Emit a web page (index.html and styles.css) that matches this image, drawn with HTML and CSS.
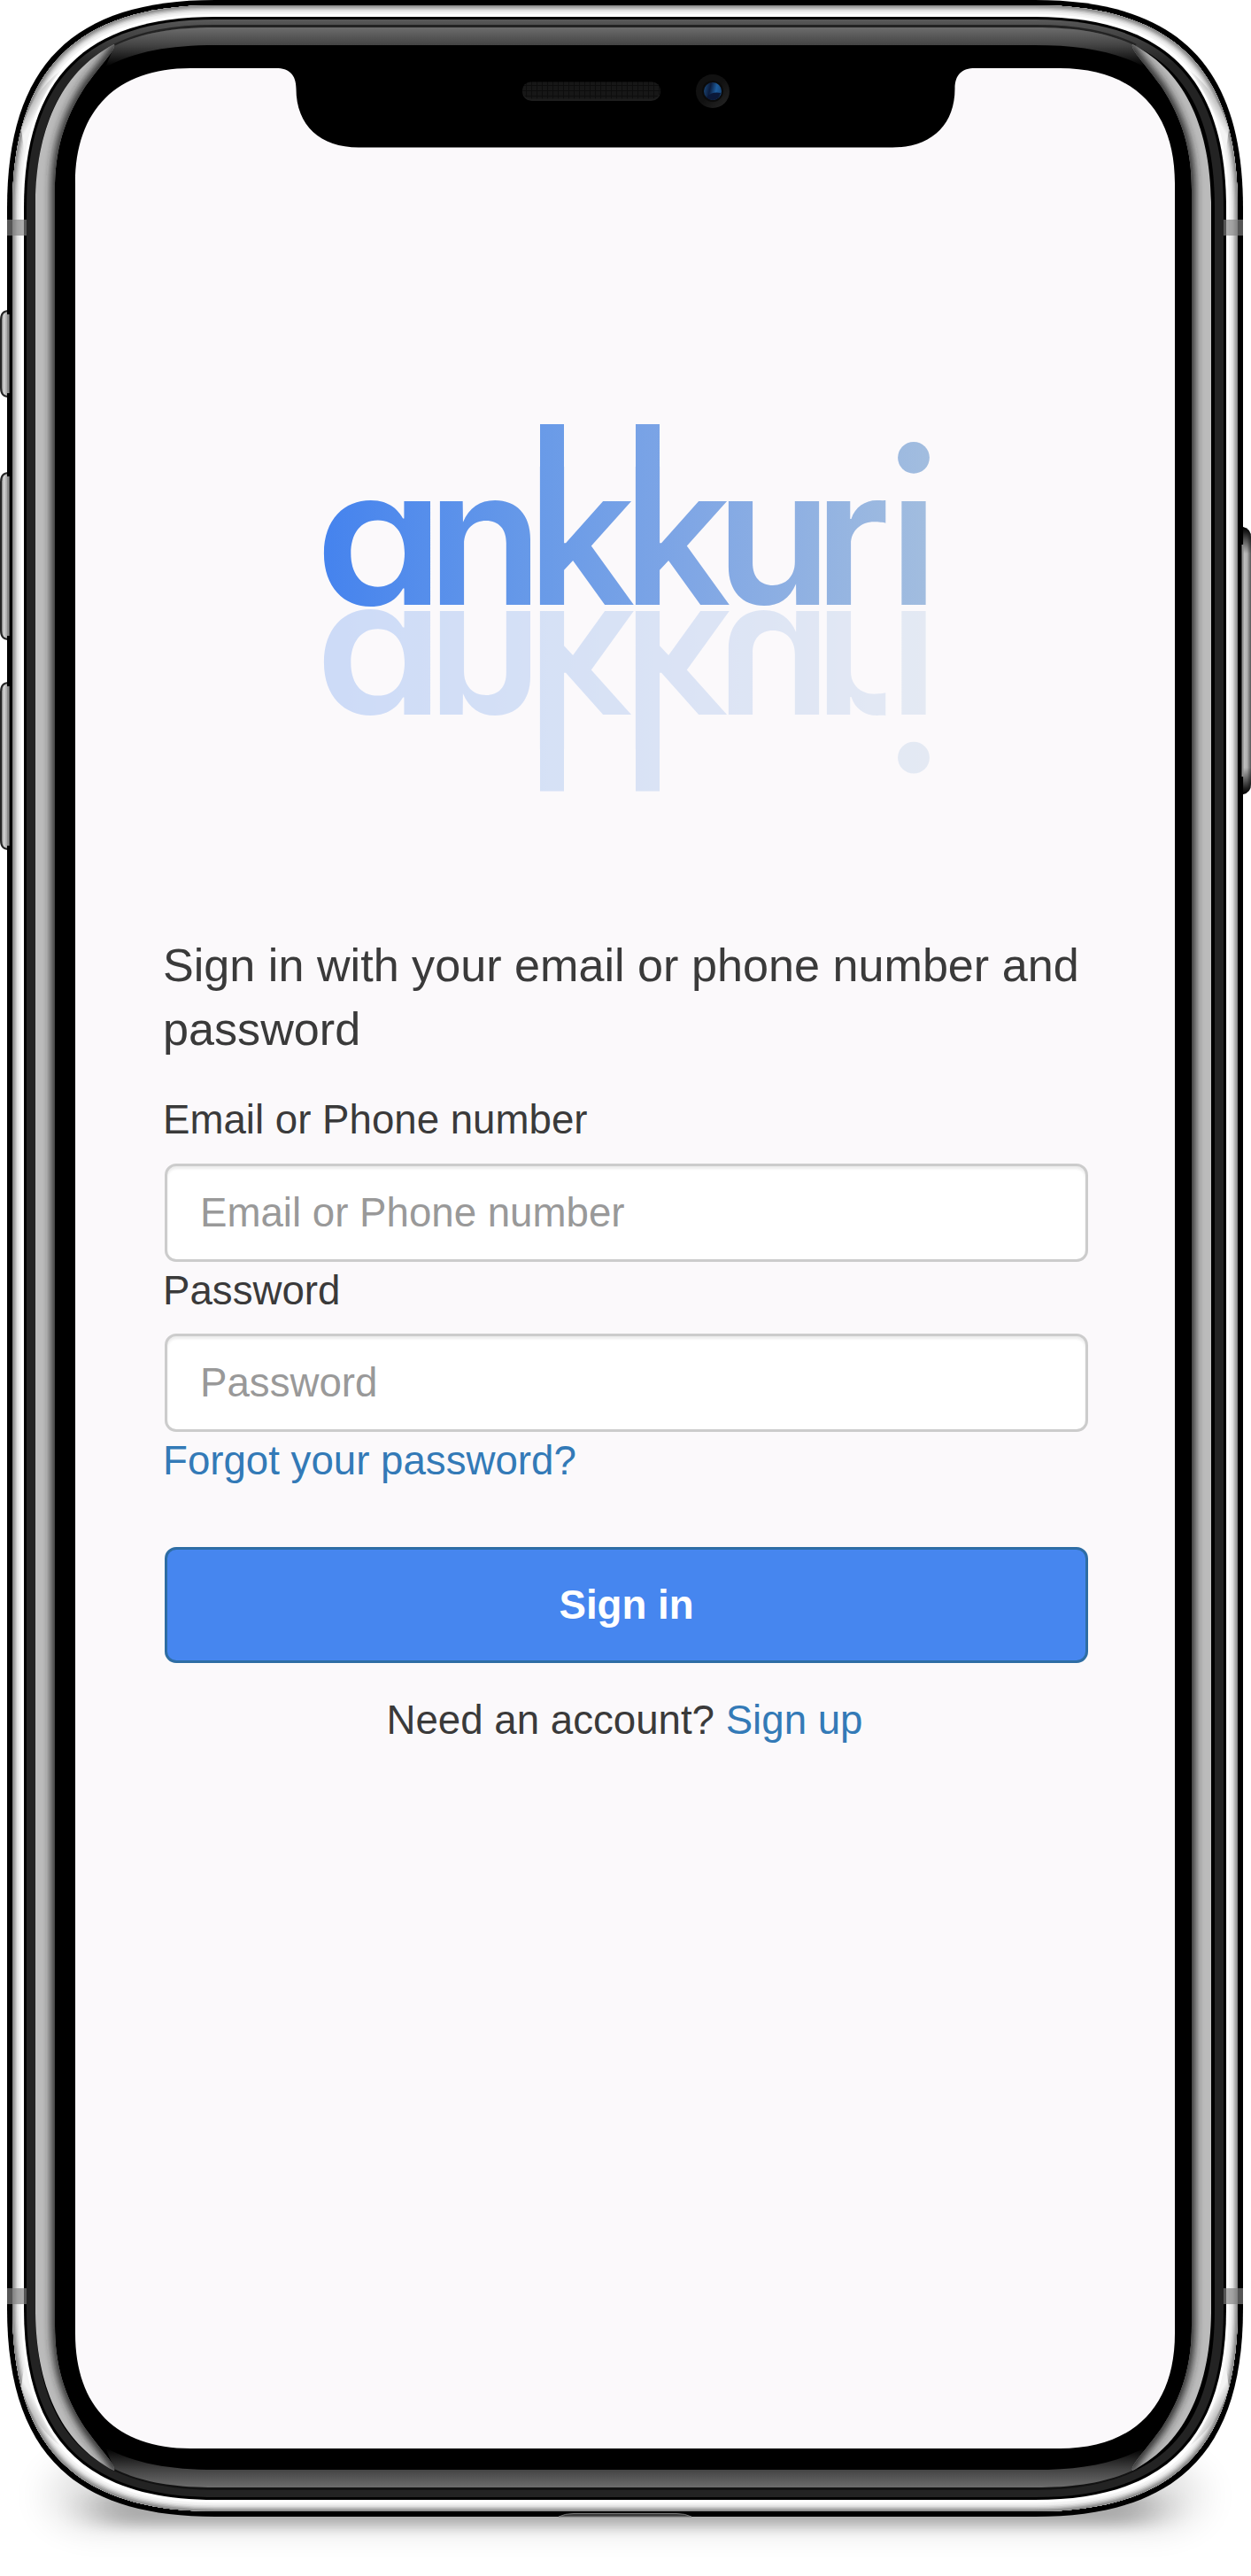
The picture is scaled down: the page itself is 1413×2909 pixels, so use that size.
FILE: index.html
```html
<!DOCTYPE html>
<html lang="en">
<head>
<meta charset="utf-8">
<title>ankkuri – Sign in</title>
<link rel="stylesheet" href="styles.css">
</head>
<body>
<div class="device">
  <svg class="frame" width="1413" height="2909" viewBox="0 0 1413 2909" aria-hidden="true">
    <defs>
      <path id="rim" d="M8 235C8 74 82 0 243 0H1169C1330 0 1404 74 1404 235V2607C1404 2768 1330 2842 1169 2842H243C82 2842 8 2768 8 2607Z"/>
      <path id="chrome" d="M14 235C14 78 86 6 243 6H1169C1326 6 1398 78 1398 235V2607C1398 2764 1326 2836 1169 2836H243C86 2836 14 2764 14 2607Z"/>
      <path id="lip" d="M27 235C27 88 96 19 243 19H1169C1316 19 1385 88 1385 235V2607C1385 2754 1316 2823 1169 2823H243C96 2823 27 2754 27 2607Z"/>
      <path id="band" d="M30 235C30 90 98 22 243 22H1169C1314 22 1382 90 1382 235V2607C1382 2752 1314 2820 1169 2820H243C98 2820 30 2752 30 2607Z"/>
      <path id="glass" d="M40 235C40 95 103 31 243 31H1169C1309 31 1372 95 1372 235V2607C1372 2747 1309 2811 1169 2811H243C103 2811 40 2747 40 2607Z"/>
      <clipPath id="chromeClip"><use href="#chrome"/></clipPath>
      <clipPath id="sideClip"><path d="M40 228C41 150 66 82 129 50C131 56 118 68 96 98C72 135 62 170 62 215V1421H40Z"/></clipPath>
      <linearGradient id="bandFill" gradientUnits="userSpaceOnUse" x1="0" y1="22" x2="0" y2="72">
        <stop offset="0" stop-color="#5a5a5a"/><stop offset=".12" stop-color="#505050"/><stop offset="1" stop-color="#232323"/>
      </linearGradient>
      <linearGradient id="topFill" gradientUnits="userSpaceOnUse" x1="0" y1="31" x2="0" y2="75">
        <stop offset="0" stop-color="#6c6c6c"/><stop offset=".46" stop-color="#434343"/><stop offset="1" stop-color="#000"/>
      </linearGradient>
      <linearGradient id="bottomFill" gradientUnits="userSpaceOnUse" x1="0" y1="2809" x2="0" y2="2765">
        <stop offset="0" stop-color="#6c6c6c"/><stop offset=".46" stop-color="#434343"/><stop offset="1" stop-color="#000"/>
      </linearGradient>
      <linearGradient id="glint" gradientUnits="userSpaceOnUse" x1="34" y1="108" x2="48" y2="116">
        <stop offset="0" stop-color="#999"/><stop offset="1" stop-color="#f4f4f4"/>
      </linearGradient>
      <linearGradient id="keyFill" x1="0" y1="0" x2="1" y2="0">
        <stop offset="0" stop-color="#555"/><stop offset=".3" stop-color="#d4d4d4"/><stop offset=".55" stop-color="#b4b4b4"/><stop offset="1" stop-color="#777"/>
      </linearGradient>
      <linearGradient id="powerFill" x1="0" y1="0" x2="1" y2="0">
        <stop offset="0" stop-color="#777"/><stop offset=".3" stop-color="#bebebe"/><stop offset=".6" stop-color="#b0b0b0"/><stop offset="1" stop-color="#555"/>
      </linearGradient>
      <linearGradient id="powerEnds" x1="0" y1="0" x2="0" y2="1">
        <stop offset="0" stop-color="#000"/><stop offset=".02" stop-color="#000" stop-opacity=".85"/><stop offset=".1" stop-color="#000" stop-opacity="0"/><stop offset=".9" stop-color="#000" stop-opacity="0"/><stop offset=".98" stop-color="#000" stop-opacity=".85"/><stop offset="1" stop-color="#000"/>
      </linearGradient>
      <linearGradient id="ring" x1="0" y1="0" x2="1" y2="1">
        <stop offset=".5" stop-color="#111"/><stop offset="1" stop-color="#272727"/>
      </linearGradient>
      <linearGradient id="lens" x1="0" y1="0" x2="1" y2=".2">
        <stop offset="0" stop-color="#1d4d7e"/><stop offset=".4" stop-color="#0c1c3c"/><stop offset=".75" stop-color="#1d5c9c"/><stop offset="1" stop-color="#184a80"/>
      </linearGradient>
      <pattern id="mesh" width="6" height="6" patternUnits="userSpaceOnUse">
        <rect width="6" height="6" fill="#171717"/><path d="M0 .5H6M.5 0V6" stroke="#0d0d0d"/>
      </pattern>
      <filter id="soft" filterUnits="userSpaceOnUse" x="0" y="0" width="160" height="1500"><feGaussianBlur stdDeviation="5"/></filter>
      <filter id="shadeWide" filterUnits="userSpaceOnUse" x="-100" y="2650" width="1613" height="350"><feGaussianBlur stdDeviation="24 18"/></filter>
      <filter id="shadeNear" filterUnits="userSpaceOnUse" x="0" y="2700" width="1413" height="300"><feGaussianBlur stdDeviation="24 7"/></filter>
      <g id="side">
        <g clip-path="url(#sideClip)">
          <rect x="30" y="30" width="110" height="1400" fill="#bbb"/>
          <path d="M128 48C131 56 118 68 96 98C72 135 62 170 62 215V1460" transform="translate(3 0)" fill="none" stroke="#282828" stroke-width="14" filter="url(#soft)"/>
        </g>
      </g>
      <path id="gleam" d="M24 146C32 120 46 97 69 79C48 106 34 137 28 175Z" fill="url(#glint)"/>
    </defs>

    <rect x="60" y="2780" width="1292" height="76" rx="38" fill="#000" opacity=".13" filter="url(#shadeWide)"/>
    <rect x="110" y="2815" width="1192" height="38" rx="19" fill="#000" opacity=".24" filter="url(#shadeNear)"/>

    <g fill="url(#keyFill)" stroke="#262626" stroke-width="2">
      <path d="M12 351H10Q1 351 1 361V438Q1 448 10 448H12Z"/>
      <path d="M12 534H10Q1 534 1 544V712Q1 722 10 722H12Z"/>
      <path d="M12 771H10Q1 771 1 781V949Q1 959 10 959H12Z"/>
    </g>
    <path d="M1402 595H1404Q1413 597 1413 607V885Q1413 895 1404 897H1402Z" fill="url(#powerFill)"/>
    <path d="M1402 595H1404Q1413 597 1413 607V885Q1413 895 1404 897H1402Z" fill="url(#powerEnds)"/>

    <use href="#rim"/>
    <path d="M8 355H10V444H8ZM8 538H10V718H8ZM8 775H10V955H8Z" fill="#8c8c8c"/>
    <path d="M10 355H11V444H10ZM10 538H11V718H10ZM10 775H11V955H10Z" fill="#555"/>
    <path d="M1402.500 615H1404.500V877H1402.500Z" fill="#909090"/>
    <use href="#chrome" fill="#fff"/>
    <g clip-path="url(#chromeClip)" fill="none">
      <use href="#chrome" stroke="#f4f4f4" stroke-width="20"/>
      <use href="#chrome" stroke="#ededed" stroke-width="16"/>
      <use href="#chrome" stroke="#dedede" stroke-width="13"/>
      <use href="#chrome" stroke="#cbcbcb" stroke-width="10"/>
      <use href="#chrome" stroke="#b5b5b5" stroke-width="7.500"/>
      <use href="#chrome" stroke="#9f9f9f" stroke-width="5"/>
      <use href="#chrome" stroke="#8a8a8a" stroke-width="2.500"/>
    </g>
    <use href="#gleam"/>
    <use href="#gleam" transform="matrix(-1 0 0 1 1412 0)"/>
    <use href="#gleam" transform="matrix(1 0 0 -1 0 2842)"/>
    <use href="#gleam" transform="matrix(-1 0 0 -1 1412 2842)"/>
    <use href="#lip"/>
    <use href="#band" fill="url(#bandFill)"/>
    <use href="#glass"/>
    <path d="M129 51C160 36 195 29.500 243 29.500H1169C1217 29.500 1252 36 1283 51" fill="none" stroke="#232323" stroke-width="3"/>
    <path d="M129 52C160 37 195 31 243 31H1169C1217 31 1252 37 1283 52L1293 76C1260 58 1220 51 1169 51H243C192 51 152 58 119 76Z" fill="url(#topFill)"/>
    <path d="M127 2788C160 2803 195 2810.500 243 2810.500H1169C1217 2810.500 1252 2803 1285 2788" fill="none" stroke="#121212" stroke-width="3"/>
    <path d="M129 2788C160 2803 195 2809 243 2809H1169C1217 2809 1252 2803 1283 2788L1293 2764C1260 2782 1220 2789 1169 2789H243C192 2789 152 2782 119 2764Z" fill="url(#bottomFill)"/>
    <use href="#side"/>
    <use href="#side" transform="matrix(-1 0 0 1 1408 0)"/>
    <use href="#side" transform="matrix(1 0 0 -1 0 2840)"/>
    <use href="#side" transform="matrix(-1 0 0 -1 1408 2840)"/>

    <path d="M85 207C85 124 132 77 215 77H312C326 77 334.500 84 334.500 100C334.500 142 362 166.500 405 166.500H1008C1051 166.500 1078.500 142 1078.500 100C1078.500 84 1087 77 1101 77H1197C1280 77 1327 124 1327 207V2635C1327 2718 1280 2765 1197 2765H215C132 2765 85 2718 85 2635Z" fill="#fbf9fb"/>
    <g fill="#808080" fill-opacity=".667">
      <path d="M8 248H30V266H8ZM1382 248H1404V266H1382ZM8 2584H30V2602H8ZM1382 2584H1404V2602H1382Z"/>
    </g>
    <path d="M631 2842Q638 2838.500 648 2838.500H764Q774 2838.500 781 2842Z" fill="#3c3c3c" stroke="#777"/>
    <rect x="590" y="93" width="156" height="21" rx="10.500" fill="#1d1d1d"/>
    <rect x="590" y="92.500" width="156" height="19" rx="9.500" fill="url(#mesh)"/>
    <circle cx="805" cy="103" r="19" fill="url(#ring)"/>
    <circle cx="805" cy="103" r="12" fill="#0b0b0b"/>
    <circle cx="805" cy="103" r="10" fill="url(#lens)"/>
    <path d="M798 110Q804 103 814 105Q812 113 805 113Q801 113 798 110Z" fill="#0b1838"/>
  </svg>

  <main class="screen">
    <svg class="logo" width="690" height="420" viewBox="360 476 690 420" role="img" aria-label="ankkuri">
      <defs>
        <linearGradient id="ink" gradientUnits="userSpaceOnUse" x1="365" y1="0" x2="1050" y2="0">
          <stop offset="0" stop-color="#4583ee"/><stop offset=".35" stop-color="#689ae8"/><stop offset=".6" stop-color="#7fa6e5"/><stop offset="1" stop-color="#a2bddf"/>
        </linearGradient>
      </defs>
      <g id="word" fill="url(#ink)">
        <text class="wordmark" y="682.700"><tspan x="355.800" textLength="146" lengthAdjust="spacingAndGlyphs">a</tspan><tspan x="482.500 595.600 703.600 808.600 919.500 1003.900">nkkuri</tspan></text>
        <path d="M610 479H637V640H610ZM718 479H745V640H718Z"/>
        <path d="M1008 500H1050V561H1008Z" fill="#fbf9fb"/>
        <circle cx="1032" cy="516.800" r="17.900"/>
      </g>
      <use href="#word" transform="matrix(1 0 0 -1 0 1372.400)" opacity=".25"/>
    </svg>

    <form class="signin">
      <h1 class="title">Sign in with your email or phone number and password</h1>
      <label class="label" for="user">Email or Phone number</label>
      <input class="field" id="user" type="text" placeholder="Email or Phone number">
      <label class="label" for="pass">Password</label>
      <input class="field" id="pass" type="password" placeholder="Password">
      <a class="link" href="#">Forgot your password?</a>
      <button class="submit" type="submit">Sign in</button>
      <p class="signup">Need an account? <a class="link" href="#">Sign up</a></p>
    </form>
  </main>
</div>
</body>
</html>
```

FILE: styles.css
```css
* {
  box-sizing: border-box;
}

body {
  margin: 0;
  background: #fff;
  font-family: "Liberation Sans", Arial, sans-serif;
  font-size: 45.65px;
  line-height: 66px;
  color: #3a3a3a;
}

.device {
  position: relative;
  width: 1413px;
  height: 2909px;
  overflow: hidden;
}

/* phone artwork lies behind the screen content */
.frame {
  position: absolute;
  inset: 0;
}

.screen {
  position: relative;
  display: flex;
  flex-direction: column;
  padding: 476px 184px 0;
}

.logo {
  display: block;
  margin-left: 176px;
}

.wordmark {
  font-family: Inter, sans-serif;
  font-size: 214px;
  font-weight: 600;
  font-feature-settings: "cv11" 1;
}

.signin {
  display: flex;
  flex-direction: column;
  margin-top: 158px;
}

.title {
  margin: 0 0 34px;
  font-size: 52.15px;
  font-weight: 400;
  line-height: 72px;
}

.label {
  height: 66px;
}

.field {
  width: 1043px;
  height: 111px;
  margin: 15px 0 0 2px;
  padding: 0 37px;
  border: 3px solid #ccc;
  border-radius: 13px;
  background: #fff;
  box-shadow: inset 0 3px 3px rgba(0, 0, 0, 0.075);
  font: inherit;
  color: #555;
}

#user {
  margin-top: 16px;
}

.field::placeholder {
  color: #999;
  opacity: 1;
}

.link {
  color: #337ab7;
  text-decoration: none;
}

.submit {
  width: 1043px;
  height: 131px;
  margin: 64px 0 32px 2px;
  padding: 0;
  border: 3px solid #2e6da4;
  border-radius: 13px;
  background: #4686ef;
  font: inherit;
  font-weight: 700;
  color: #fff;
}

.signup {
  width: 1043px;
  margin: 0;
  text-align: center;
}
```
